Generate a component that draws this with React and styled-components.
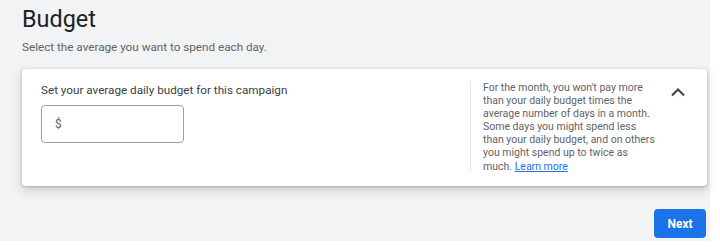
import styled, { createGlobalStyle } from "styled-components";

const GlobalStyle = createGlobalStyle`
    html, body {
        margin: 0;
        padding: 0;
        background: #ffffff;
    }
    body {
        font-family: Roboto, "Liberation Sans", Arial, sans-serif;
    }
`;

const Page = styled.main`
    width: 710px;
    height: 241px;
    box-sizing: border-box;
    background: #f1f3f4;
    padding: 3px 3px 0 22px;
    display: flex;
    flex-direction: column;
`;

const Title = styled.h1`
    margin: 0;
    font-size: 23.4px;
    line-height: 32px;
    font-weight: 400;
    color: #202124;
`;

const Subtitle = styled.p`
    margin: 2px 0 0;
    font-size: 11.7px;
    line-height: 20px;
    color: #5f6368;
`;

const Card = styled.section`
    margin-top: 12px;
    height: 117px;
    box-sizing: border-box;
    background: #fff;
    border-radius: 4px;
    box-shadow: 0 1px 3px rgba(60, 64, 67, 0.3), 0 4px 8px 2px rgba(60, 64, 67, 0.15);
    display: flex;
    align-items: flex-start;
    padding: 12px 17px 0 19px;
`;

const Field = styled.div`
    flex: 1;
    display: flex;
    flex-direction: column;
    gap: 6px;
`;

const Label = styled.label`
    font-size: 11.7px;
    line-height: 18px;
    color: #3c4043;
`;

const InputBox = styled.div`
    width: 143px;
    height: 38px;
    box-sizing: border-box;
    border: 1px solid #9aa0a6;
    border-radius: 4px;
    display: flex;
    align-items: center;
    padding-left: 13px;
    font-size: 12px;
    color: #5f6368;
`;

const Help = styled.p`
    margin: 0;
    width: 174px;
    border-left: 1px solid #e8eaed;
    padding-left: 12px;
    font-size: 10.5px;
    line-height: 13.1px;
    color: #5f6368;

    & > a {
        color: #1a73e8;
        text-decoration: underline;
    }
`;

const Toggle = styled.button`
    margin-left: 9px;
    width: 24px;
    height: 24px;
    padding: 0;
    border: 0;
    background: none;
    display: flex;
    align-items: center;
    justify-content: center;
    margin-top: -1px;
`;

const Footer = styled.div`
    margin-top: 23px;
    display: flex;
    justify-content: flex-end;
    padding-right: 1px;
`;

const NextButton = styled.button`
    width: 52px;
    height: 29px;
    border: 0;
    border-radius: 4px;
    background: #1a73e8;
    color: #fff;
    font-family: Roboto, "Liberation Sans", Arial, sans-serif;
    font-size: 12px;
    font-weight: 700;
    padding: 0;
`;

const App = () => {
    return (
        <>
            <GlobalStyle />
            <Page>
                <Title>Budget</Title>
                <Subtitle>Select the average you want to spend each day.</Subtitle>
                <Card>
                    <Field>
                        <Label>Set your average daily budget for this campaign</Label>
                        <InputBox>$</InputBox>
                    </Field>
                    <Help>
                        For the month, you won't pay more than your daily budget times the average
                        number of days in a month. Some days you might spend less than your daily
                        budget, and on others you might spend up to twice as much. <a href="#">Learn more</a>
                    </Help>
                    <Toggle aria-label="Collapse">
                        <svg width="14" height="9" viewBox="0 0 14 9">
                            <polyline points="1,7.5 7,1.5 13,7.5" fill="none" stroke="#3c4043" strokeWidth="2" />
                        </svg>
                    </Toggle>
                </Card>
                <Footer>
                    <NextButton>Next</NextButton>
                </Footer>
            </Page>
        </>
    );
};

export default App;
